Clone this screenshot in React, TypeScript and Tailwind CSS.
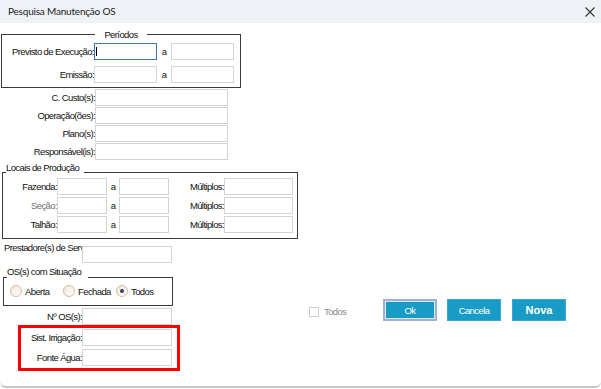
import React from "react";

const Field = ({ className = "", focused = false }: { className?: string; focused?: boolean }) => {
  return (
    <div
      className={`h-[17px] shrink-0 border bg-white ${
        focused ? "border-[#3d74b0]" : "border-[#d3d3d3]"
      } ${className}`}
    >
      {focused && <div className="ml-px mt-[3px] h-[9px] w-px bg-black" />}
    </div>
  );
};

const Radio = ({ label, checked = false }: { label: string; checked?: boolean }) => {
  return (
    <div className="flex w-[53px] shrink-0 items-center gap-[3px]">
      <span className="flex h-[12px] w-[12px] items-center justify-center rounded-full border border-[#d6b99c] bg-gradient-to-br from-[#efe6dc] to-white">
        {checked && <span className="h-[4px] w-[4px] rounded-full bg-[#2d3f66]" />}
      </span>
      <span>{label}</span>
    </div>
  );
};

const App = () => {
  return (
    <div className="h-[389px] w-[601px] overflow-hidden whitespace-nowrap bg-white font-['Liberation_Sans',sans-serif] text-[9.5px] leading-[13px] tracking-[-0.6px] text-[#111]">
      <div className="flex h-[388px] flex-col rounded-b-[6px] border-b-2 border-[#c6c6c6]">
        {/* Title bar */}
        <div className="flex h-[23px] shrink-0 items-center justify-between bg-[#eef2f6] pl-[8px] pr-[6px]">
          <span className="font-['Lato',sans-serif] text-[10px] tracking-[-0.2px] text-[#1b1b1b]">
            Pesquisa Manutenção OS
          </span>
          <svg width="10" height="10" viewBox="0 0 10 10" className="text-[#333]">
            <path d="M0.5 0.5 L9.5 9.5 M9.5 0.5 L0.5 9.5" stroke="currentColor" strokeWidth="1.1" />
          </svg>
        </div>

        <div className="flex flex-1">
          {/* Left column */}
          <div className="flex w-[300px] shrink-0 flex-col">
            {/* Períodos */}
            <fieldset className="ml-px mt-[5px] w-[240px] border border-[#3a3a3a]">
              <legend className="mx-auto px-[9px] leading-[13px]">Períodos</legend>
              <div className="flex flex-col gap-[6px] pb-[4px] pt-[2px]">
                <div className="flex items-center">
                  <span className="w-[92px] shrink-0 text-right">Previsto de Execução:</span>
                  <Field className="w-[63px]" focused />
                  <span className="w-[14px] shrink-0 text-center">a</span>
                  <Field className="w-[63px]" />
                </div>
                <div className="flex items-center">
                  <span className="w-[92px] shrink-0 text-right">Emissão:</span>
                  <Field className="w-[63px]" />
                  <span className="w-[14px] shrink-0 text-center">a</span>
                  <Field className="w-[63px]" />
                </div>
              </div>
            </fieldset>

            {/* Filtros simples */}
            <div className="mt-px flex flex-col gap-px">
              <div className="flex items-center">
                <span className="w-[95px] shrink-0 text-right">C. Custo(s):</span>
                <Field className="w-[133px]" />
              </div>
              <div className="flex items-center">
                <span className="w-[95px] shrink-0 text-right">Operação(ões):</span>
                <Field className="w-[133px]" />
              </div>
              <div className="flex items-center">
                <span className="w-[95px] shrink-0 text-right">Plano(s):</span>
                <Field className="w-[133px]" />
              </div>
              <div className="flex items-center">
                <span className="w-[95px] shrink-0 text-right">Responsável(is):</span>
                <Field className="w-[133px]" />
              </div>
            </div>

            {/* Locais de Produção */}
            <fieldset className="ml-[2px] mt-px w-[296px] border border-[#3a3a3a]">
              <legend className="ml-[3px] pb-[10px] pr-[5px] leading-[13px]">Locais de Produção</legend>
              <div className="-mt-[6px] flex flex-col gap-[2px] pb-[5px]">
                <div className="flex items-center">
                  <span className="w-[54px] shrink-0 text-right">Fazenda:</span>
                  <Field className="w-[50px]" />
                  <span className="w-[12px] shrink-0 text-center">a</span>
                  <Field className="w-[50px]" />
                  <span className="w-[55px] shrink-0 text-right">Múltiplos:</span>
                  <Field className="w-[69px]" />
                </div>
                <div className="flex items-center">
                  <span className="w-[54px] shrink-0 text-right text-[#707070]">Seção:</span>
                  <Field className="w-[50px]" />
                  <span className="w-[12px] shrink-0 text-center">a</span>
                  <Field className="w-[50px]" />
                  <span className="w-[55px] shrink-0 text-right">Múltiplos:</span>
                  <Field className="w-[69px]" />
                </div>
                <div className="flex items-center">
                  <span className="w-[54px] shrink-0 text-right">Talhão:</span>
                  <Field className="w-[50px]" />
                  <span className="w-[12px] shrink-0 text-center">a</span>
                  <Field className="w-[50px]" />
                  <span className="w-[55px] shrink-0 text-right">Múltiplos:</span>
                  <Field className="w-[69px]" />
                </div>
              </div>
            </fieldset>

            {/* Prestadores */}
            <div className="mt-[2px] flex items-start">
              <span className="ml-[4px] w-[78px] shrink-0 overflow-hidden">Prestadore(s) de Serv</span>
              <Field className="mt-[5px] w-[90px]" />
            </div>

            {/* OS(s) com Situação */}
            <fieldset className="ml-[3px] mt-[2px] w-[170px] border border-[#3a3a3a]">
              <legend className="ml-[3px] pb-[12px] pr-[7px] leading-[13px]">OS(s) com Situação</legend>
              <div className="-mt-[5px] flex h-[12px] items-center pl-[6px]">
                <Radio label="Aberta" />
                <Radio label="Fechada" />
                <Radio label="Todos" checked />
              </div>
              <div className="h-[8px]" />
            </fieldset>

            <div className="mt-[2px] flex items-center">
              <span className="w-[82px] shrink-0 text-right">Nº OS(s):</span>
              <Field className="w-[90px]" />
            </div>

            {/* Destaque */}
            <div className="ml-[18px] flex w-[162px] flex-col gap-[3px] border-[3px] border-[#ff0000] pb-[2px] pt-px">
              <div className="flex items-center">
                <span className="w-[61px] shrink-0 text-right">Sist. Irrigação:</span>
                <Field className="w-[90px]" />
              </div>
              <div className="flex items-center">
                <span className="w-[61px] shrink-0 text-right">Fonte Água:</span>
                <Field className="w-[90px]" />
              </div>
            </div>
          </div>

          {/* Right column */}
          <div className="flex items-start pl-[9px] pt-[276px]">
            <div className="flex h-[22px] items-center">
              <label className="mt-[3px] flex w-[74px] shrink-0 items-center gap-[5px] text-[#8a8a8a]">
                <span className="h-[10px] w-[10px] border border-[#cdcdcd] bg-white" />
                Todos
              </label>
              <button className="flex h-[22px] w-[54px] items-center justify-center border-2 border-[#a3afd3] bg-[#189bc4] text-white shadow-[inset_0_0_0_1px_#dfe7f3]">
                Ok
              </button>
              <button className="ml-[10px] flex h-[22px] w-[54px] items-center justify-center border border-[#3aa9cf] bg-[#189bc4] text-white">
                Cancela
              </button>
              <button className="ml-[11px] flex h-[22px] w-[54px] items-center justify-center border border-[#3aa9cf] bg-[#189bc4] text-[11px] font-bold tracking-normal text-white">
                Nova
              </button>
            </div>
          </div>
        </div>
      </div>
    </div>
  );
};

export default App;
